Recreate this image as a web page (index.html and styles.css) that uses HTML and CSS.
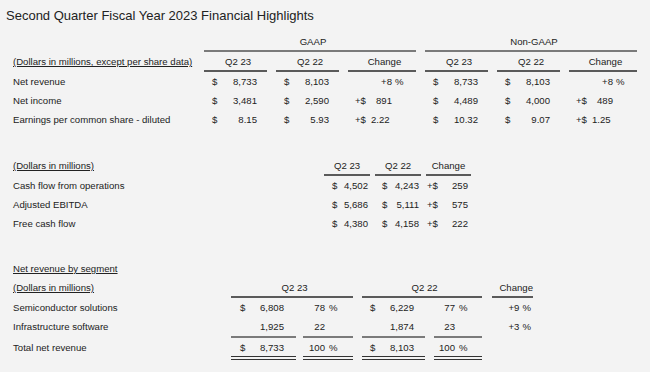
FILE: index.html
```html
<!DOCTYPE html>
<html lang="en">
<head>
<meta charset="utf-8">
<title>Second Quarter Fiscal Year 2023 Financial Highlights</title>
<link rel="stylesheet" href="styles.css">
</head>
<body>
<h1 class="title">Second Quarter Fiscal Year 2023 Financial Highlights</h1>

<div class="tbl t1">
  <div class="row grp">
    <div class="lbl"></div>
    <div class="gh">GAAP</div>
    <div class="gh">Non-GAAP</div>
  </div>
  <div class="row hdr">
    <div class="lbl"><span class="ul">(Dollars in millions, except per share data)</span></div>
    <div class="ch q">Q2 23</div>
    <div class="ch q">Q2 22</div>
    <div class="ch c">Change</div>
    <div class="ch q">Q2 23</div>
    <div class="ch q">Q2 22</div>
    <div class="ch c">Change</div>
  </div>
  <div class="row">
    <div class="lbl">Net revenue</div>
    <div class="num q"><span>$</span><span>8,733</span></div>
    <div class="num q"><span>$</span><span>8,103</span></div>
    <div class="chg c"><span class="pre"></span><span class="v">+8</span><span class="sfx">%</span></div>
    <div class="num q"><span>$</span><span>8,733</span></div>
    <div class="num q"><span>$</span><span>8,103</span></div>
    <div class="chg c"><span class="pre"></span><span class="v">+8</span><span class="sfx">%</span></div>
  </div>
  <div class="row">
    <div class="lbl">Net income</div>
    <div class="num q"><span>$</span><span>3,481</span></div>
    <div class="num q"><span>$</span><span>2,590</span></div>
    <div class="chg c"><span class="pre">+$</span><span class="v">891</span><span class="sfx"></span></div>
    <div class="num q"><span>$</span><span>4,489</span></div>
    <div class="num q"><span>$</span><span>4,000</span></div>
    <div class="chg c"><span class="pre">+$</span><span class="v">489</span><span class="sfx"></span></div>
  </div>
  <div class="row">
    <div class="lbl">Earnings per common share - diluted</div>
    <div class="num q"><span>$</span><span>8.15</span></div>
    <div class="num q"><span>$</span><span>5.93</span></div>
    <div class="chg c"><span class="pre">+$</span><span class="v left">2.22</span><span class="sfx"></span></div>
    <div class="num q"><span>$</span><span>10.32</span></div>
    <div class="num q"><span>$</span><span>9.07</span></div>
    <div class="chg c"><span class="pre">+$</span><span class="v left">1.25</span><span class="sfx"></span></div>
  </div>
</div>

<div class="tbl t2">
  <div class="row hdr">
    <div class="lbl"><span class="ul">(Dollars in millions)</span></div>
    <div class="ch q">Q2 23</div>
    <div class="ch q">Q2 22</div>
    <div class="ch c">Change</div>
  </div>
  <div class="row">
    <div class="lbl">Cash flow from operations</div>
    <div class="num q a"><span>$</span><span>4,502</span></div>
    <div class="num q b"><span>$</span><span>4,243</span></div>
    <div class="num c"><span>+$</span><span>259</span></div>
  </div>
  <div class="row">
    <div class="lbl">Adjusted EBITDA</div>
    <div class="num q a"><span>$</span><span>5,686</span></div>
    <div class="num q b"><span>$</span><span>5,111</span></div>
    <div class="num c"><span>+$</span><span>575</span></div>
  </div>
  <div class="row">
    <div class="lbl">Free cash flow</div>
    <div class="num q a"><span>$</span><span>4,380</span></div>
    <div class="num q b"><span>$</span><span>4,158</span></div>
    <div class="num c"><span>+$</span><span>222</span></div>
  </div>
</div>

<div class="tbl t3">
  <div class="row">
    <div class="lbl"><span class="ul">Net revenue by segment</span></div>
  </div>
  <div class="row hdr">
    <div class="lbl"><span class="ul">(Dollars in millions)</span></div>
    <div class="ch g1">Q2 23</div>
    <div class="ch g2">Q2 22</div>
    <div class="ch cc">Change</div>
  </div>
  <div class="row">
    <div class="lbl">Semiconductor solutions</div>
    <div class="num a1"><span>$</span><span>6,808</span></div>
    <div class="pct p1"><span class="n">78</span><span class="pc">%</span></div>
    <div class="num a2"><span>$</span><span>6,229</span></div>
    <div class="pct p2"><span class="n">77</span><span class="pc">%</span></div>
    <div class="pct cc"><span>+9</span><span class="pc">%</span></div>
  </div>
  <div class="row sub">
    <div class="lbl">Infrastructure software</div>
    <div class="num a1 line"><span></span><span>1,925</span></div>
    <div class="pct p1 line"><span class="n">22</span><span class="pc"></span></div>
    <div class="num a2 line"><span></span><span>1,874</span></div>
    <div class="pct p2 line"><span class="n">23</span><span class="pc"></span></div>
    <div class="pct cc"><span>+3</span><span class="pc">%</span></div>
  </div>
  <div class="row tot">
    <div class="lbl">Total net revenue</div>
    <div class="num a1 dbl"><span>$</span><span>8,733</span></div>
    <div class="pct p1 dbl"><span class="n">100</span><span class="pc">%</span></div>
    <div class="num a2 dbl"><span>$</span><span>8,103</span></div>
    <div class="pct p2 dbl"><span class="n">100</span><span class="pc">%</span></div>
  </div>
</div>
</body>
</html>
```

FILE: styles.css
```css
* { box-sizing: border-box; }

html, body {
  margin: 0;
  background: #f3f3f3;
}

body {
  width: 650px;
  height: 372px;
  overflow: hidden;
  font-family: "Liberation Sans", Arial, sans-serif;
  font-size: 9.6px;
  color: #222;
}

.title {
  margin: 0;
  padding: 8px 0 0 6px;
  font-size: 13px;
  line-height: 15px;
  font-weight: normal;
  color: #222;
}

.tbl { padding-left: 13px; }

.row {
  display: flex;
  line-height: 19px;
  white-space: nowrap;
}

.lbl { flex: none; }

.ul { text-decoration: underline; }

.hdr {
  padding-top: 2px;
  line-height: 16px;
}

.ch {
  flex: none;
  text-align: center;
  border-bottom: 2px solid #5a5a5a;
}

.num {
  flex: none;
  display: flex;
  justify-content: space-between;
}

/* ---------- Table 1 ---------- */
.t1 .row { gap: 9px; }
.t1 .lbl { width: 182px; }
.t1 .q { width: 63px; }
.t1 .c { width: 68px; }
.t1 .ch { padding-left: 5px; }

.t1 .grp {
  margin-top: 10px;
  line-height: 17px;
}
.t1 .gh {
  flex: none;
  width: 212px;
  padding-left: 6px;
  text-align: center;
  border-bottom: 2px solid #7a7a7a;
}

.t1 .num { padding: 0 10px 0 8px; }

.chg {
  flex: none;
  display: flex;
  padding-left: 7px;
}
.chg .v { flex: 1; text-align: right; }
.chg .v.left { text-align: left; padding-left: 5px; }
.chg .sfx { width: 24px; padding-left: 3px; }

/* ---------- Table 2 ---------- */
.t2 { margin-top: 27px; }
.t2 .row { gap: 5px; }
.t2 .lbl { width: 306px; }
.t2 .q { width: 46px; }
.t2 .c { width: 45px; }
.t2 .num.a { padding: 0 2px 0 8px; }
.t2 .num.b { padding: 0 2px 0 7px; }
.t2 .num.c { padding: 0 3px 0 1px; }

/* ---------- Table 3 ---------- */
.t3 { margin-top: 26px; }
.t3 .lbl { width: 218px; }
.t3 .ch { padding-left: 5px; }
.t3 .g1 { width: 122px; }
.t3 .g2 { width: 120px; margin-left: 9px; }
.t3 .ch.cc {
  width: 41px;
  margin-left: 10px;
  padding-left: 0;
  text-align: right;
}

.a1 { width: 65px; padding: 0 12px 0 9px; }
.a2 { width: 63px; margin-left: 9px; padding: 0 11px 0 8px; }

.pct { flex: none; display: flex; }
.pct .n { text-align: right; }
.pct .pc { padding-left: 4px; }
.p1 { width: 50px; margin-left: 7px; }
.p1 .n { width: 22px; }
.p2 { width: 48px; margin-left: 9px; }
.p2 .n { width: 21px; }
.pct.cc {
  width: 41px;
  margin-left: 10px;
  justify-content: flex-end;
  padding-right: 2px;
}
.pct.cc .pc { padding-left: 3px; }

.t3 .sub {
  padding-top: 1px;
  line-height: 18px;
}
.line { border-bottom: 2px solid #7a7a7a; }

.t3 .tot {
  padding-top: 2px;
  line-height: 16px;
}
.dbl { border-bottom: 4px double #333; }
```
